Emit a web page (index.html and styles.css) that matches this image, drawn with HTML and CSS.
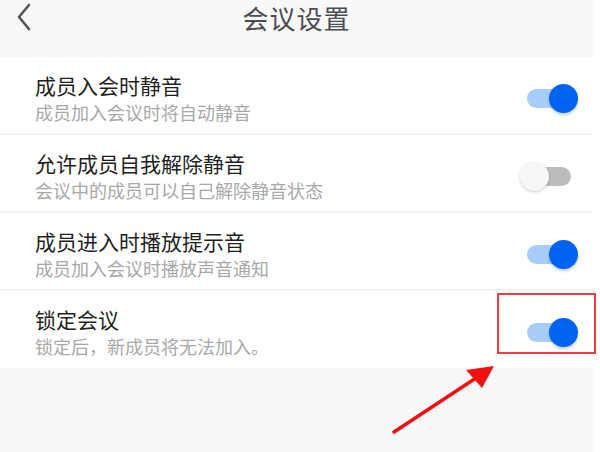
FILE: index.html
```html
<!DOCTYPE html>
<html lang="zh-CN">
<head>
    <meta charset="UTF-8">
    <meta name="viewport" content="width=device-width, initial-scale=1.0">
    <title>会议设置</title>
    <link rel="stylesheet" href="styles.css">
</head>
<body>
    <div class="screen">
        <header class="topbar">
            <svg class="back" width="16" height="28" viewBox="0 0 16 28">
                <path d="M13 2 L3 14 L13 26" fill="none" stroke="#555" stroke-width="2.6" stroke-linecap="round" stroke-linejoin="round"/>
            </svg>
            <h1>会议设置</h1>
        </header>

        <ul class="settings">
            <li class="row">
                <div class="text">
                    <div class="title">成员入会时静音</div>
                    <div class="desc">成员加入会议时将自动静音</div>
                </div>
                <span class="switch on"></span>
            </li>
            <li class="row">
                <div class="text">
                    <div class="title">允许成员自我解除静音</div>
                    <div class="desc">会议中的成员可以自己解除静音状态</div>
                </div>
                <span class="switch"></span>
            </li>
            <li class="row">
                <div class="text">
                    <div class="title">成员进入时播放提示音</div>
                    <div class="desc">成员加入会议时播放声音通知</div>
                </div>
                <span class="switch on"></span>
            </li>
            <li class="row">
                <div class="text">
                    <div class="title">锁定会议</div>
                    <div class="desc">锁定后，新成员将无法加入。</div>
                </div>
                <span class="switch on"></span>
                <span class="highlight"></span>
            </li>
        </ul>

        <svg class="arrow" width="120" height="80" viewBox="0 0 120 80">
            <path d="M4 74 L86 20" stroke="#f01010" stroke-width="3.5" stroke-linecap="round"/>
            <path d="M104 8 L76 12 L92 30 Z" fill="#f01010"/>
        </svg>
    </div>
</body>
</html>
```

FILE: styles.css
```css
* {
    margin: 0;
    padding: 0;
    box-sizing: border-box;
}

body {
    font-family: "Noto Sans CJK SC", "Noto Sans", sans-serif;
    background: #ffffff;
    width: 600px;
    height: 452px;
    overflow: hidden;
}

.screen {
    position: relative;
    width: 593px;
    height: 452px;
    background: #f8f8f8;
}

.topbar {
    position: relative;
    height: 57px;
    display: flex;
    justify-content: center;
}

.topbar h1 {
    font-size: 26px;
    font-weight: 400;
    color: #4c4c54;
    line-height: 36px;
    letter-spacing: 1px;
}

.back {
    position: absolute;
    left: 16px;
    top: 3px;
}

.settings {
    list-style: none;
    background: #ffffff;
}

.row {
    position: relative;
    height: 78px;
    display: flex;
    align-items: center;
    padding: 0 22px 0 35px;
    border-bottom: 2px solid #f2f2f2;
}

.row:last-child {
    border-bottom: none;
    height: 77px;
}

.text {
    flex: 1;
    display: flex;
    flex-direction: column;
    gap: 0;
    margin-top: 4px;
}

.title {
    font-size: 21px;
    line-height: 29px;
    color: #1f1f1f;
}

.desc {
    font-size: 18px;
    line-height: 24px;
    color: #a8a8a8;
}

.switch {
    position: relative;
    width: 44px;
    height: 19px;
    border-radius: 10px;
    background: #bcbcbc;
    margin-top: 6px;
}

.switch::after {
    content: "";
    position: absolute;
    top: -5px;
    left: -7px;
    width: 29px;
    height: 29px;
    border-radius: 50%;
    background: #f7f7f7;
    box-shadow: 0 1px 3px rgba(0, 0, 0, 0.2);
}

.switch.on {
    background: #a9cdfa;
}

.switch.on::after {
    left: auto;
    right: -7px;
    background: #0064f0;
    box-shadow: 0 2px 3px rgba(0, 60, 160, 0.25);
}

.highlight {
    position: absolute;
    left: 497px;
    top: 2px;
    width: 99px;
    height: 61px;
    border: 2px solid #f43a3a;
}

.arrow {
    position: absolute;
    left: 390px;
    top: 358px;
}
```
